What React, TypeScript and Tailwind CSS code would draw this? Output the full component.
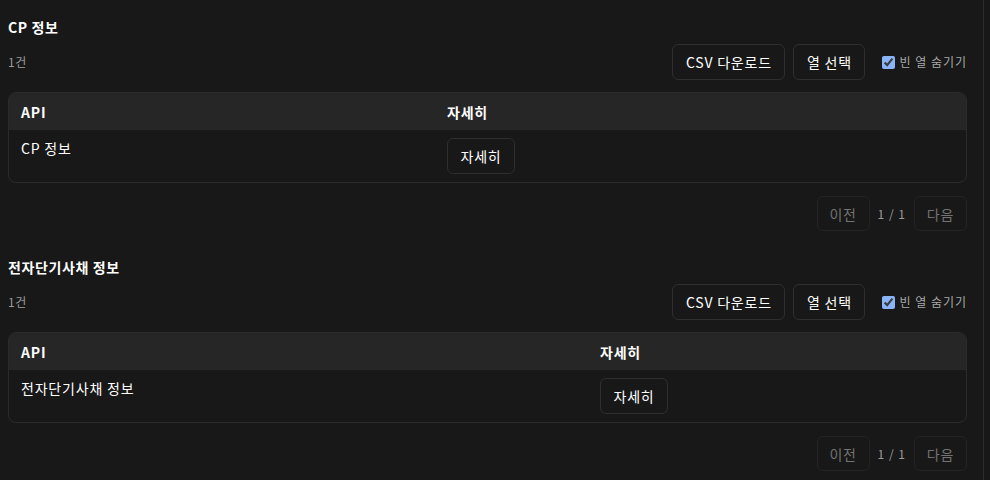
import { useState } from "react"

type Section = {
  title: string
  count: number
  rows: string[]
  apiColWidth: string
}

const sections: Section[] = [
  { title: "CP 정보", count: 1, rows: ["CP 정보"], apiColWidth: "w-[426px]" },
  { title: "전자단기사채 정보", count: 1, rows: ["전자단기사채 정보"], apiColWidth: "w-[579px]" },
]

const DataSection = ({ section }: { section: Section }) => {
  const [ hideEmpty, setHideEmpty ] = useState(true)

  return (
    <section className="pt-[17px] pb-[9px]">
      <h2 className="h-5 leading-5 text-sm font-bold text-white tracking-[0.6px]">{section.title}</h2>

      <div className="mt-[7px] h-9 flex items-center justify-between">
        <span className="text-xs text-[#9a9a9a] tracking-[0.5px]">{section.count}건</span>

        <div className="flex items-center gap-2">
          <button className="h-9 w-[113px] rounded-md border border-[#2f2f2f] text-sm text-white tracking-[0.8px]">
            CSV 다운로드
          </button>
          <button className="h-9 w-[72px] rounded-md border border-[#2f2f2f] text-sm text-white tracking-[0.8px]">
            열 선택
          </button>
          <label className="ml-[9px] flex items-center gap-1 text-xs text-[#a8a8a8] tracking-[1px]">
            <input
              type="checkbox"
              checked={hideEmpty}
              onChange={() => setHideEmpty(!hideEmpty)}
              className="w-[13px] h-[13px] m-0 accent-[#8ab4f8]"
            />
            빈 열 숨기기
          </label>
        </div>
      </div>

      <div className="mt-3 rounded-lg border border-[#2b2b2b] overflow-hidden">
        <table className="w-full table-fixed border-collapse text-sm tracking-[0.8px]">
          <thead>
            <tr className="bg-[#262626] h-[37px]">
              <th className={`${section.apiColWidth} px-3 text-left font-bold text-white`}>API</th>
              <th className="px-3 text-left font-bold text-white">자세히</th>
            </tr>
          </thead>
          <tbody>
            { section.rows.map((row) => (
              <tr key={row}>
                <td className="px-3 py-2 align-top leading-5 text-white">{row}</td>
                <td className="px-3 py-2 align-top">
                  <button className="h-9 w-[68px] rounded-md border border-[#2f2f2f] text-white">
                    자세히
                  </button>
                </td>
              </tr>
            ))}
          </tbody>
        </table>
      </div>

      <div className="mt-[13px] flex items-center justify-end gap-2">
        <button className="h-[35px] w-[53px] rounded-md border border-[#242424] text-sm text-[#737373] tracking-[0.8px]" disabled>
          이전
        </button>
        <span className="text-xs text-[#9a9a9a] tracking-[1px]">1 / 1</span>
        <button className="h-[35px] w-[53px] rounded-md border border-[#242424] text-sm text-[#737373] tracking-[0.8px]" disabled>
          다음
        </button>
      </div>
    </section>
  )
}

const App = () => {
  return (
    <div
      className="min-h-screen bg-[#181818]"
      style={{ fontFamily: '"Noto Sans CJK KR", "Noto Sans", sans-serif' }}
    >
      <main className="w-[984px] min-h-screen pl-2 pr-4 border-r border-[#2c2c2c]">
        { sections.map((s) => (
          <DataSection key={s.title} section={s} />
        ))}
      </main>
    </div>
  )
}

export default App
